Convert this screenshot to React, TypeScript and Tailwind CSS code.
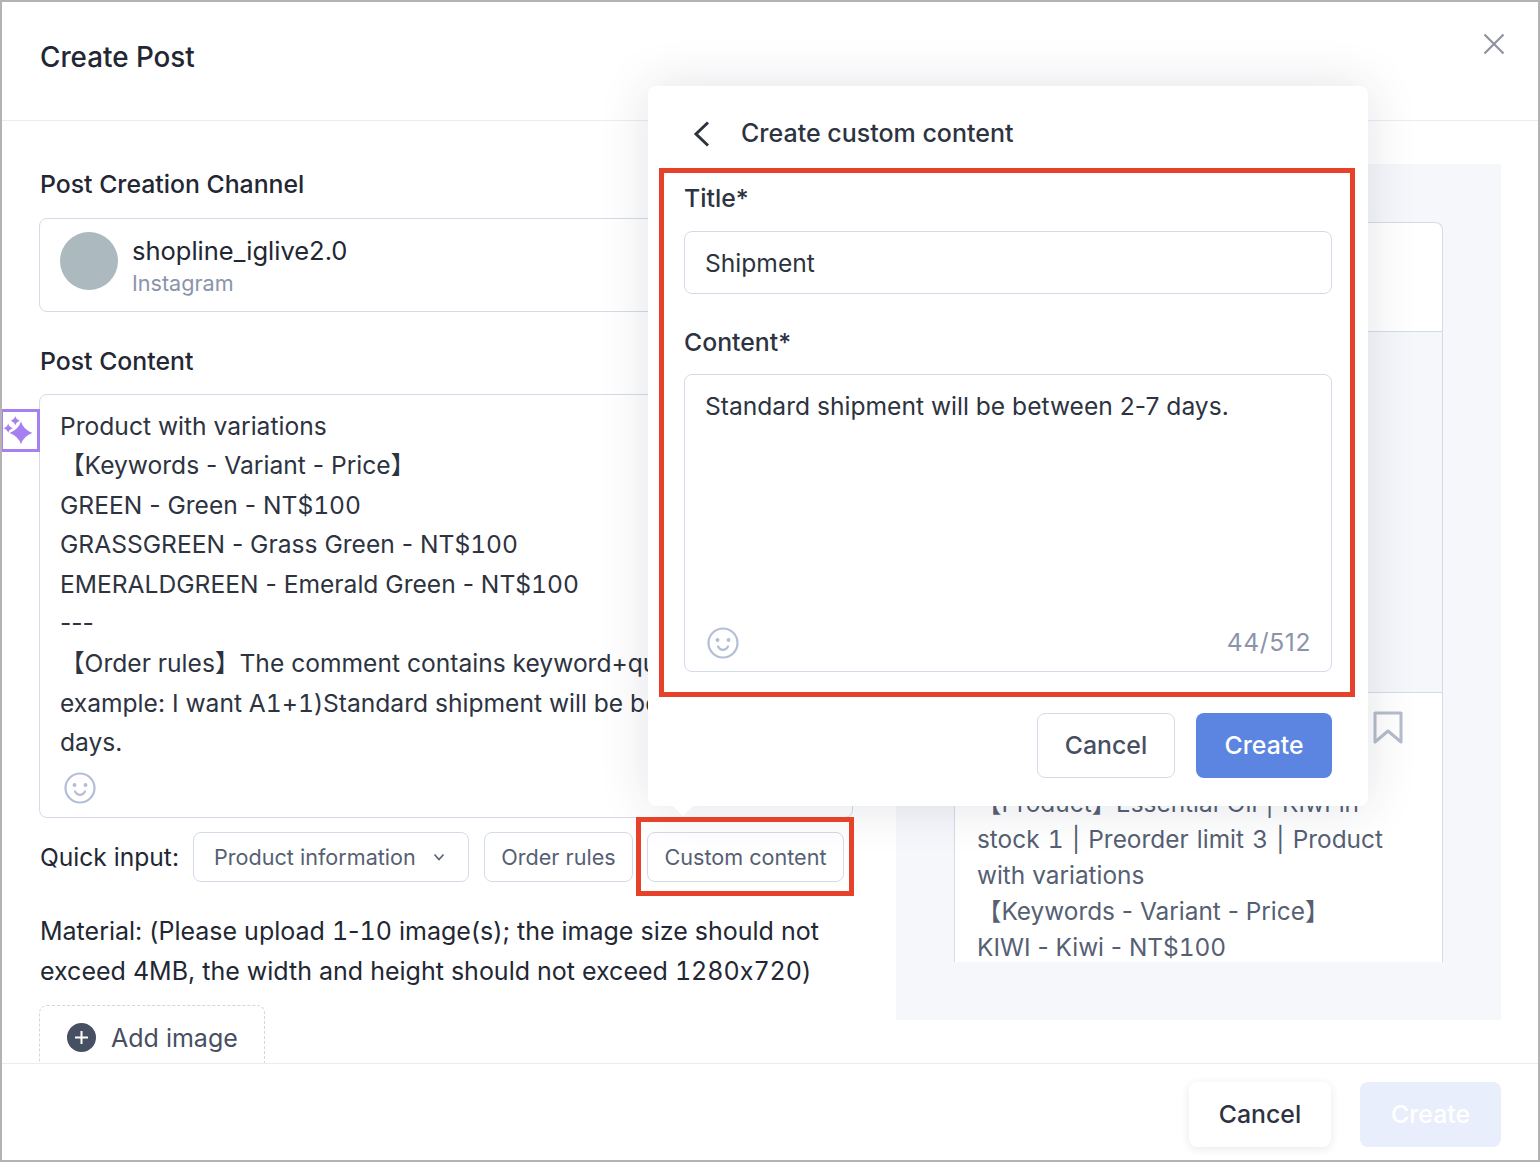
const font = "font-['Inter','Noto_Sans_CJK_SC',sans-serif] [font-feature-settings:'calt'_0]";

// digits in the reference are wider than Inter's default, hyphens are not
function Txt({ children }: { children: string }) {
  return (
    <>
      {children.split(/(\d+)/).map((part, i) =>
        /^\d+$/.test(part) ? (
          <span key={i} className="[font-feature-settings:'calt'_0,'tnum'_1]">{part}</span>
        ) : (
          part
        ),
      )}
    </>
  );
}

function Smile() {
  return (
    <svg width="32" height="32" viewBox="0 0 32 32" fill="none" stroke="#b3bfd6" strokeWidth="2.200" strokeLinecap="round">
      <circle cx="16" cy="16" r="14.500" />
      <path d="M11 19.500c1.200 2.200 3 3.300 5 3.300s3.800-1.100 5-3.300" />
      <circle cx="10.500" cy="13" r="0.900" fill="#b3bfd6" />
      <circle cx="21.500" cy="13" r="0.900" fill="#b3bfd6" />
    </svg>
  );
}

function Sparkles() {
  return (
    <svg className="mt-[2px]" width="36" height="36" viewBox="0 0 36 36" fill="#a67ff0">
      <path d="M19 7Q21.500 15.500 31 19 21.500 22.500 19 31 16.500 22.500 7 19 16.500 15.500 19 7z" />
      <path d="M13 1Q14 5 18 6 14 7 13 11 12 7 8 6 12 5 13 1z" />
      <path d="M5.500 9Q6.500 13 10.500 14 6.500 15 5.500 19 4.500 15 .5 14 4.500 13 5.500 9z" />
    </svg>
  );
}

const postLines = [
  'Product with variations',
  '【Keywords - Variant - Price】',
  'GREEN - Green - NT$100',
  'GRASSGREEN - Grass Green - NT$100',
  'EMERALDGREEN - Emerald Green - NT$100',
  '---',
  '【Order rules】The comment contains keyword+quantity (for',
  'example: I want A1+1)Standard shipment will be between 2-7',
  'days.',
];

function LeftColumn() {
  return (
    <div className="w-[852px] shrink-0 pl-[37px] pt-[43px]">
      <div className="h-[40px] pl-px text-[24.800px] leading-[40px] font-[450] text-[#222733]">Post Creation Channel</div>
      <div className="mt-[14px] flex h-[94px] w-[814px] items-start rounded-lg border border-[#d3dbe8] pl-[20px] pt-[13px]">
        <div className="h-[58px] w-[58px] rounded-full bg-[#acbac0]" />
        <div className="ml-[14px] mt-[2px]">
          <div className="text-[25.500px] leading-[34px] text-[#222733]">shopline_iglive2.0</div>
          <div className="text-[21.600px] leading-[30px] text-[#8a94ab]">Instagram</div>
        </div>
      </div>
      <div className="mt-[29px] h-[40px] pl-px text-[24.800px] leading-[40px] font-[450] text-[#222733]">Post Content</div>
      <div className="relative mt-[13px] h-[424px] w-[814px] rounded-lg border border-[#d3dbe8] pl-[20px] pt-[11.500px]">
        {postLines.map((line) => (
          <div key={line} className="h-[39.600px] whitespace-nowrap text-[24.600px] leading-[39.600px] text-[#2d3340]"><Txt>{line}</Txt></div>
        ))}
        <div className="ml-[4px] mt-[9.500px]"><Smile /></div>
        <div className="absolute left-[-40px] top-[14px] flex h-[43px] w-[40px] items-center justify-center border-[3px] border-[#a67ff0] bg-white">
          <Sparkles />
        </div>
      </div>
      <div className="mt-[14px] flex h-[50px] items-center">
        <span className="w-[154px] pl-px text-[24.600px] text-[#222733]">Quick input:</span>
        <div className="flex h-[50px] w-[276px] items-center rounded-lg border border-[#d3dbe8] pl-[20px] text-[21.600px] text-[#565f73]">
          Product information
          <svg className="ml-[17px]" width="12" height="8" viewBox="0 0 12 8" fill="none" stroke="#565f73" strokeWidth="1.600"><path d="M1.500 1.500 6 6.500l4.500-5" /></svg>
        </div>
        <div className="ml-[15px] flex h-[50px] w-[149px] items-center justify-center rounded-lg border border-[#d3dbe8] text-[21.600px] text-[#565f73]">Order rules</div>
        <div className="ml-[14px] flex h-[50px] w-[197px] items-center justify-center rounded-lg border border-[#d3dbe8] text-[21.600px] text-[#565f73]">Custom content</div>
      </div>
      <div className="mt-[29px] w-[814px] whitespace-nowrap pl-px text-[25px] leading-[40px] text-[#222733]">
        <Txt>Material: (Please upload 1-10 image(s); the image size should not</Txt>
        <br />
        <Txt>exceed 4MB, the width and height should not exceed 1280x720)</Txt>
      </div>
      <div className="mt-[14px] flex h-[72px] w-[226px] items-start rounded-lg border border-dashed border-[#d3d6dd] pl-[27px] pt-[17px]">
        <div className="flex h-[29px] w-[29px] items-center justify-center rounded-full bg-[#474f63] text-white">
          <svg width="15" height="15" viewBox="0 0 15 15" stroke="#fff" strokeWidth="2"><path d="M7.500 1v13M1 7.500h13" /></svg>
        </div>
        <span className="ml-[15px] text-[25px] leading-[30px] text-[#474f63]">Add image</span>
      </div>
    </div>
  );
}

function Preview() {
  return (
    <div className="ml-[42px] mt-[43px] h-[856px] w-[605px] shrink-0 bg-[#f6f7fb] px-[58px] pt-[58px]">
      <div className="h-[740px] overflow-hidden rounded-t-lg border-x border-t border-[#d3dbe8] bg-white">
        <div className="h-[109px] border-b border-[#d3dbe8]" />
        <div className="h-[361px] border-b border-[#d3dbe8] bg-[#f6f7fb]" />
        <div className="flex h-[92px] justify-end pr-[39px] pt-[18px]">
          <svg width="30" height="34" viewBox="0 0 30 34" fill="none" stroke="#b5bccb" strokeWidth="3" strokeLinejoin="round"><path d="M2 2h26v29L15 20 2 31z" /></svg>
        </div>
        <div className="whitespace-nowrap pl-[22px] text-[24.400px] leading-[36px] text-[#565f73]">
          <div className="[word-spacing:1.400px]">【Product】Essential Oil | Kiwi in</div>
          <div className="[word-spacing:1.400px]"><Txt>stock 1 | Preorder limit 3 | Product</Txt></div>
          <div>with variations</div>
          <div>【Keywords - Variant - Price】</div>
          <div><Txt>KIWI - Kiwi - NT$100</Txt></div>
        </div>
      </div>
    </div>
  );
}

function Popover() {
  return (
    <div className="absolute left-[646px] top-[84px] h-[720px] w-[720px] rounded-lg bg-white shadow-[0_0_50px_rgba(30,40,70,0.13)]">
      <div className="flex h-[78px] items-end pl-[45px]">
        <div className="flex h-[60px] items-center">
          <svg width="18" height="26" viewBox="0 0 18 26" fill="none" stroke="#2d3340" strokeWidth="3"><path d="M15 1.500 3 13l12 11.500" /></svg>
          <span className="ml-[30px] text-[25px] font-[450] text-[#2d3340]">Create custom content</span>
        </div>
      </div>
      <div className="px-[36px] pt-[17px]">
        <div className="h-[34px] text-[24.800px] leading-[34px] font-[450] text-[#2d3340]">Title*</div>
        <div className="mt-[16px] flex h-[63px] items-center rounded-lg border border-[#d3dbe8] pl-[20px] pt-[2px] text-[24.600px] text-[#2d3340]">Shipment</div>
        <div className="mt-[31px] h-[34px] text-[24.800px] leading-[34px] font-[450] text-[#2d3340]">Content*</div>
        <div className="relative mt-[15px] h-[298px] rounded-lg border border-[#d3dbe8] pl-[20px] pt-[11px] text-[24.600px] leading-[40px] text-[#2d3340]">
          Standard shipment will be between 2-7 days.
          <div className="absolute bottom-[12px] left-[22px]"><Smile /></div>
          <div className="absolute bottom-[9px] right-[20px] text-[24.600px] leading-[40px] tracking-[0.600px] text-[#8a94ab]">44/512</div>
        </div>
        <div className="mt-[41px] flex justify-end gap-[21px]">
          <div className="flex h-[65px] w-[138px] items-center justify-center rounded-lg border border-[#d3dbe8] text-[24.800px] font-[450] text-[#474f63]">Cancel</div>
          <div className="flex h-[65px] w-[136px] items-center justify-center rounded-lg bg-[#5b85e0] text-[24.800px] font-[450] text-white">Create</div>
        </div>
      </div>
      <div className="absolute -bottom-[10px] left-[24px] h-0 w-0 border-x-[11px] border-t-[11px] border-x-transparent border-t-white" />
      <div className="absolute left-[11px] top-[82px] h-[529px] w-[696px] border-[5px] border-[#e8412a]" />
    </div>
  );
}

export default function App() {
  return (
    <div className={`relative flex h-[1162px] w-[1540px] flex-col overflow-hidden border-2 border-[#b3b3b3] bg-white ${font}`}>
      <div className="flex h-[119px] shrink-0 items-start justify-between border-b border-[#ececf0] pl-[38px] pr-[35px]">
        <div className="pt-[35px] text-[27.800px] leading-[40px] font-[450] text-[#222733]">Create Post</div>
        <svg className="-mr-[1.500px] mt-[31px]" width="22" height="22" viewBox="0 0 22 22" stroke="#8d93a1" strokeWidth="2.200"><path d="M1.500 1.500l19 19M20.500 1.500l-19 19" /></svg>
      </div>
      <div className="flex h-[942px] shrink-0 overflow-hidden">
        <LeftColumn />
        <Preview />
      </div>
      <div className="flex h-[97px] shrink-0 items-start justify-end gap-[29px] border-t border-[#ececf0] pr-[37px] pt-[18px]">
        <div className="flex h-[65px] w-[142px] items-center justify-center rounded-lg bg-white text-[24.800px] font-medium text-[#2d3340] shadow-[0_2px_10px_rgba(30,40,70,0.1)]">Cancel</div>
        <div className="flex h-[65px] w-[141px] items-center justify-center rounded-lg bg-[#e8eefb] text-[24.800px] font-medium text-white">Create</div>
      </div>
      <Popover />
      <div className="absolute left-[634px] top-[815px] h-[79px] w-[218px] border-[5px] border-[#e8412a]" />
    </div>
  );
}
